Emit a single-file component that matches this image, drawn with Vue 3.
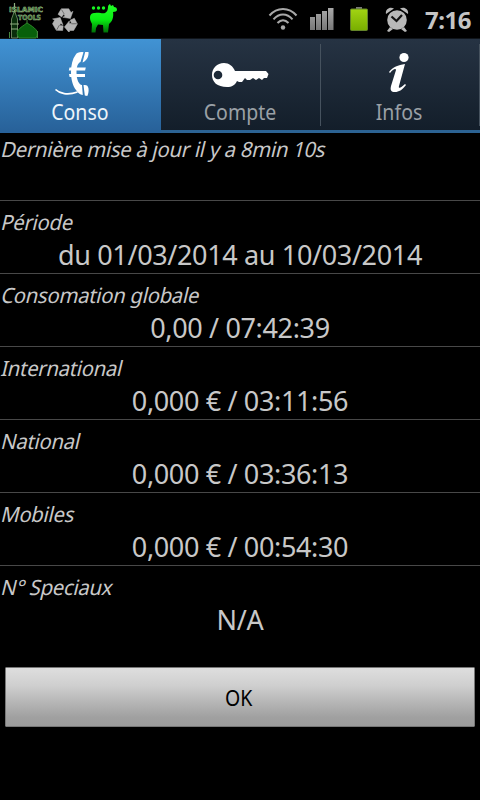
<template>
  <div class="screen">
    <header class="status-bar">
      <div class="notifications">
        <svg class="islamic-icon" width="42" height="38" viewBox="0 0 42 38">
          <path d="M6.500 38V19l3-8 3 8v19z" fill="#0a2e0c" stroke="#7d9b70" stroke-width=".8" />
          <path d="M5 24h9M6 29h7M9.500 11V3" stroke="#8fae80" stroke-width="1.2" />
          <path d="M14 38c-5-7 1-10 8-15 8 5 13 8 9 15z" fill="#08600b" stroke="#2d8628" />
          <path d="M22 23v-3M4.500 38v-6M32.500 38v-7" stroke="#46863d" stroke-width="1" />
          <text x="4" y="12" textLength="34" lengthAdjust="spacingAndGlyphs">ISLAMIC</text>
          <text x="13" y="20" textLength="23" lengthAdjust="spacingAndGlyphs">TOOLS</text>
        </svg>
        <svg class="recycle-icon" width="26" height="26" viewBox="0 0 26 26">
          <g v-for="angle in [0, 120, 240]" :key="angle" :transform="`rotate(${angle} 13 15)`">
            <path
              d="M6 8.300l3.300-5.500h7.500l2.200 3.700 2-1.200-2.600 7.200-7.600-1.200 2.200-1.300-1.200-2L9.700 11z"
              fill="#b5b5b5"
              stroke="#b5b5b5"
              stroke-width=".5"
              stroke-linejoin="round"
            />
            <path d="M9.500 3.500l2.700 4.500" stroke="#555" stroke-width=".7" />
          </g>
        </svg>
        <svg class="llama-icon" width="30" height="30" viewBox="0 0 30 30">
          <defs>
            <linearGradient id="llama" x1="0" y1="0" x2="0" y2="1">
              <stop offset="0" stop-color="#23ff28" />
              <stop offset=".55" stop-color="#08ed12" />
              <stop offset="1" stop-color="#006e08" />
            </linearGradient>
          </defs>
          <path
            d="M1 14c0-4 2-5 5-5 4-1 7 1 10 0 2-1 3-3 3-6 0-2 1-2 2-3l1 2 2-1 1 2c2 0 3 1 3 3 0 1-2 2-4 2 1 5-1 10-4 12l-1 8.500h-4.500L14 21l-5-.5L7 24l-.5 4.500H2.500L3 20c-1-2-2-4-2-6z"
            fill="url(#llama)"
          />
          <g fill="#18f622">
            <circle cx="4.500" cy="4" r="1.700" />
            <circle cx="9.500" cy="4" r="1.700" />
            <circle cx="14.500" cy="4" r="1.700" />
          </g>
        </svg>
      </div>

      <div class="system">
        <svg width="30" height="24" viewBox="0 0 30 24">
          <g fill="none" stroke="#a8a8a8" stroke-width="2">
            <path d="M1.500 8.500C9-.2 21-.2 28.500 8.500" />
            <path d="M5.500 12.300C11 5.800 19 5.800 24.500 12.300" />
            <path d="M9.500 16C13 12.200 17 12.200 20.500 16" />
          </g>
          <circle cx="15" cy="20.500" r="2.200" fill="#a8a8a8" />
        </svg>
        <svg class="signal-icon" width="24" height="22" viewBox="0 0 24 22">
          <defs>
            <linearGradient id="signal" x1="0" y1="0" x2="0" y2="1">
              <stop offset="0" stop-color="#a9a9a9" />
              <stop offset="1" stop-color="#777" />
            </linearGradient>
          </defs>
          <path d="M0 9h5v13H0zM6 6h5v16H6zM12 3h5v19h-5zM18 0h5.500v22H18z" fill="url(#signal)" />
        </svg>
        <svg class="battery-icon" width="18" height="24" viewBox="0 0 18 24">
          <defs>
            <linearGradient id="battery" x1="0" y1="0" x2="0" y2="1">
              <stop offset="0" stop-color="#a2d413" />
              <stop offset="1" stop-color="#78ae00" />
            </linearGradient>
          </defs>
          <path d="M6 0h6v2H6z" fill="#777" />
          <rect x=".5" y="2" width="17" height="21.500" rx="1" fill="url(#battery)" stroke="#64842a" />
        </svg>
        <svg class="alarm-icon" width="24" height="25" viewBox="0 0 24 25">
          <g fill="#b8b8b8">
            <circle cx="12" cy="13" r="9.800" />
            <path d="M1 7C0 3 4-1 9 1.500zM23 7c1-4-3-8-8-5.500z" />
            <path d="M5 20l-3 4 2 1 4-3zM19 20l3 4-2 1-4-3z" />
          </g>
          <path d="M6.500 9.500l5 4.500 5.500-6" fill="none" stroke="#111" stroke-width="2.200" />
        </svg>
        <span class="clock">7:16</span>
      </div>
    </header>

    <nav class="tabs">
      <button
        v-for="tab in tabs"
        :key="tab.id"
        class="tab"
        :class="{ active: tab.id === currentTab }"
        @click="currentTab = tab.id"
      >
        <svg v-if="tab.id === 'conso'" class="tab-icon" width="48" height="48" viewBox="0 0 48 48">
          <g fill="#fff">
            <path
              d="M27.500 2.200c-4-.4-6.500.3-8 2.800-3 4-4.500 10-4.500 17 0 8 2 14 5 18 2 3 4 4.500 6.800 5L26 35c-3-.5-5.500-5-5.500-12.500 0-5 1-9.200 4-10.500z"
            />
            <path d="M29.200 2h3.300c.4 4-1.200 8.500-6 10.500zM27.500 35c3-.5 4.500.5 5 3.500.3 2.500 0 5-1.200 7.500l-2.500-.5z" />
            <path d="M13.500 17.500h16.300l-.7 3H12.800zM13 24h16v3H13.600z" />
          </g>
          <path d="M-.5 39.500c4 4 12 6 22 2.500" fill="none" stroke="#fff" stroke-width="1.700" />
        </svg>
        <svg v-else-if="tab.id === 'compte'" class="tab-icon key-icon" width="58" height="48" viewBox="0 0 58 48">
          <path
            d="M13 13c5 0 9 3 11 8h31l2.500 3-1.500 4h-3l-2 2-3-2-3 2-3-2-3 2h-3l-2-2-3 4h-3l-2-1c-2 4-5 6-10 6C6 37 1 32 1 25s5-12 12-12z"
            fill="#fff"
          />
          <circle cx="7" cy="25" r="4.300" fill="#1c2937" />
        </svg>
        <svg v-else class="tab-icon" width="48" height="48" viewBox="0 0 48 48">
          <circle cx="29" cy="7.500" r="4.600" fill="#fff" />
          <path
            d="M14 22c4-5 9-7 16-8l-6 22c-1 3 2 2 6-2l1 1c-4 5-7 7-11 7-4 0-5-2-4-6l5-16c0-2-3-1-6 3z"
            fill="#fff"
          />
        </svg>
        <span class="tab-label">{{ tab.label }}</span>
      </button>
    </nav>

    <main class="content">
      <div class="update">
        <span class="label">Dernière mise à jour il y a 8min 10s</span>
      </div>

      <div v-for="item in list" :key="item.label" class="row">
        <span class="label">{{ item.label }}</span>
        <p class="value">{{ item.value }}</p>
      </div>

      <button class="ok-button"><span>OK</span></button>
    </main>
  </div>
</template>

<script setup>
import { ref } from 'vue'

const currentTab = ref('conso')

const tabs = [
  { id: 'conso', label: 'Conso' },
  { id: 'compte', label: 'Compte' },
  { id: 'infos', label: 'Infos' },
]

const list = ref([
  { label: 'Période', value: 'du 01/03/2014 au 10/03/2014' },
  { label: 'Consomation globale', value: '0,00 / 07:42:39' },
  { label: 'International', value: '0,000 € / 03:11:56' },
  { label: 'National', value: '0,000 € / 03:36:13' },
  { label: 'Mobiles', value: '0,000 € / 00:54:30' },
  { label: 'N° Speciaux', value: 'N/A' },
])
</script>

<style>
body {
  background: #000;
}
</style>

<style scoped>
.screen {
  width: 480px;
  height: 800px;
  overflow: hidden;
  background: #000;
  color: #c8c8c8;
  font-family: 'Noto Sans', sans-serif;
}

.status-bar {
  display: flex;
  justify-content: space-between;
  height: 38px;
}

.notifications,
.system {
  display: flex;
  align-items: center;
}

.notifications {
  padding-left: 5px;
}

.islamic-icon {
  overflow: visible;
}

.islamic-icon text {
  font: bold 7px 'DejaVu Sans', sans-serif;
  fill: #1c641f;
  stroke: #a5bf90;
  stroke-width: 0.5px;
}

.recycle-icon {
  margin-left: 5px;
}

.llama-icon {
  margin-left: 11px;
}

.system {
  padding-right: 9px;
}

.signal-icon {
  margin-left: 12px;
}

.battery-icon {
  margin-left: 16px;
}

.alarm-icon {
  margin-left: 17px;
}

.clock {
  margin-left: 16px;
  color: #c4c4c4;
  font-size: 24px;
  font-weight: bold;
  letter-spacing: -0.5px;
}

.tabs {
  display: flex;
  height: 95px;
  border-top: 1px solid #10151b;
  box-sizing: border-box;
}

.tab {
  display: flex;
  flex: 1;
  flex-direction: column;
  align-items: center;
  box-sizing: border-box;
  padding: 11px 2px 0 0;
  border: 0;
  border-bottom: 3px solid #2c6393;
  background:
    linear-gradient(#46525e, #46525e) right 5px / 1px 82px no-repeat,
    linear-gradient(#263343, #131e2a);
  color: #9aa0a6;
  font-family: inherit;
}

.tab.active {
  flex: 0 0 161px;
  border-bottom-color: #28629a;
  background: linear-gradient(#4193d4, #28629a);
  color: #eef5fa;
}

.tab-icon {
  display: block;
  overflow: visible;
}

.tab-label {
  font-size: 21px;
  line-height: 28px;
  transform: scaleX(0.93);
}

.content {
  display: flex;
  flex-direction: column;
  padding-top: 1px;
}

.update {
  height: 66px;
  border-bottom: 1px solid #484848;
}

.row {
  height: 72px;
  border-bottom: 1px solid #484848;
}

.row:nth-last-child(2) {
  border-bottom: 0;
}

.label {
  display: inline-block;
  font-size: 21px;
  line-height: 30px;
  letter-spacing: -0.3px;
  transform: scaleX(0.967) skewX(-14deg);
  transform-origin: 0 23px;
  vertical-align: top;
  white-space: nowrap;
}

.row .label {
  padding-top: 6px;
  transform-origin: 0 29px;
}

.value {
  margin: 0;
  font-size: 27px;
  line-height: 36px;
  letter-spacing: -0.35px;
  text-align: center;
}

.ok-button {
  height: 60px;
  margin: 29px 5px 0;
  padding: 2px 2px 0 0;
  border: 1px solid #777;
  border-radius: 1px;
  background: linear-gradient(#dedede, #cfcfcf 30%, #a0a0a0 85%, #9c9c9c);
  color: #000;
  font-family: inherit;
  font-size: 21px;
}

.ok-button span {
  display: inline-block;
  transform: scaleX(0.93);
}
</style>
